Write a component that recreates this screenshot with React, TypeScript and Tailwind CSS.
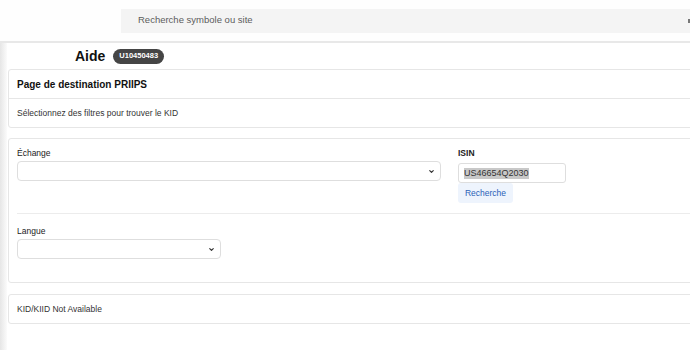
import React from "react";

function Chevron() {
  return (
    <svg width="7" height="7" viewBox="0 0 10 10" className="text-[#333]">
      <path d="M2.5 3.8 L5 6.3 L7.5 3.8" fill="none" stroke="currentColor" strokeWidth="1.7" strokeLinecap="round" strokeLinejoin="round" />
    </svg>
  );
}

function SelectBox({ width }: { width: string }) {
  return (
    <div className={`${width} mt-px h-[20px] border border-[#dedede] rounded-[4px] bg-white flex items-center justify-end pr-[5px]`}>
      <Chevron />
    </div>
  );
}

export default function App() {
  return (
    <div
      className="w-[690px] h-[350px] overflow-hidden bg-white flex flex-col text-[#222]"
      style={{ fontFamily: '"Liberation Sans", Arial, sans-serif' }}
    >
      <div className="h-[43px] shrink-0 border-b-2 border-[#e8e8e8] bg-[#fefefe] flex items-center pl-[121px]">
        <div className="flex-1 h-[24px] bg-[#f4f4f4] flex items-center pl-[17px] text-[9.5px] text-[#5c5c5c] relative">
          Recherche symbole ou site
          <div className="absolute right-0 top-[10px] w-[2px] h-[4px] bg-[#777]" />
        </div>
      </div>
      <div className="flex flex-1 min-h-0">
        <div className="w-[7px] shrink-0 bg-gradient-to-r from-[#e6e6e6] to-[#fbfbfb]" />
        <div className="flex-1 flex flex-col pl-px mr-[-12px]">
          <div className="h-[26px] flex items-center pl-[67px] gap-[8px]">
            <span className="text-[14px] font-bold text-[#111]">Aide</span>
            <span className="h-[15px] px-[6px] rounded-full bg-[#454545] text-white text-[7.5px] font-bold flex items-center">U10450483</span>
          </div>
          <div className="border border-[#e6e6e6] rounded-[3px]">
            <div className="h-[29px] flex items-center pl-[8px] border-b border-[#e6e6e6] text-[10px] font-bold text-[#111]">
              Page de destination PRIIPS
            </div>
            <div className="h-[28px] flex items-center pl-[8px] text-[8.5px] text-[#333]">
              Sélectionnez des filtres pour trouver le KID
            </div>
          </div>
          <div className="mt-[10px] border border-[#e6e6e6] rounded-[3px] pl-[8px] h-[145px] flex flex-col">
            <div className="flex pt-[7px] h-[75px] border-b border-[#ececec]">
              <div className="w-[424px] flex flex-col">
                <span className="text-[8.5px] text-[#222] leading-[14px]">Échange</span>
                <SelectBox width="w-[424px]" />
              </div>
              <div className="ml-[17px] flex flex-col">
                <span className="text-[8.5px] font-bold text-[#222] leading-[14px]">ISIN</span>
                <div className="mt-[3px] w-[108px] h-[20px] border border-[#dedede] rounded-[3px] flex items-center pl-[5px]">
                  <span className="bg-[#c8c8c8] text-[9px] text-[#333] leading-[11px]">US46654Q2030</span>
                </div>
                <div className="w-[55px] h-[20px] bg-[#eef4fd] rounded-[3px] flex items-center justify-center text-[8.5px] text-[#2a62b8]">
                  Recherche
                </div>
              </div>
            </div>
            <div className="pt-[10px] flex flex-col">
              <span className="text-[8.5px] text-[#222] leading-[14px]">Langue</span>
              <SelectBox width="w-[204px]" />
            </div>
          </div>
          <div className="mt-[11px] border border-[#e6e6e6] rounded-[3px] h-[30px] flex items-center pl-[8px] text-[8.5px] text-[#333]">
            KID/KIID Not Available
          </div>
        </div>
      </div>
    </div>
  );
}
